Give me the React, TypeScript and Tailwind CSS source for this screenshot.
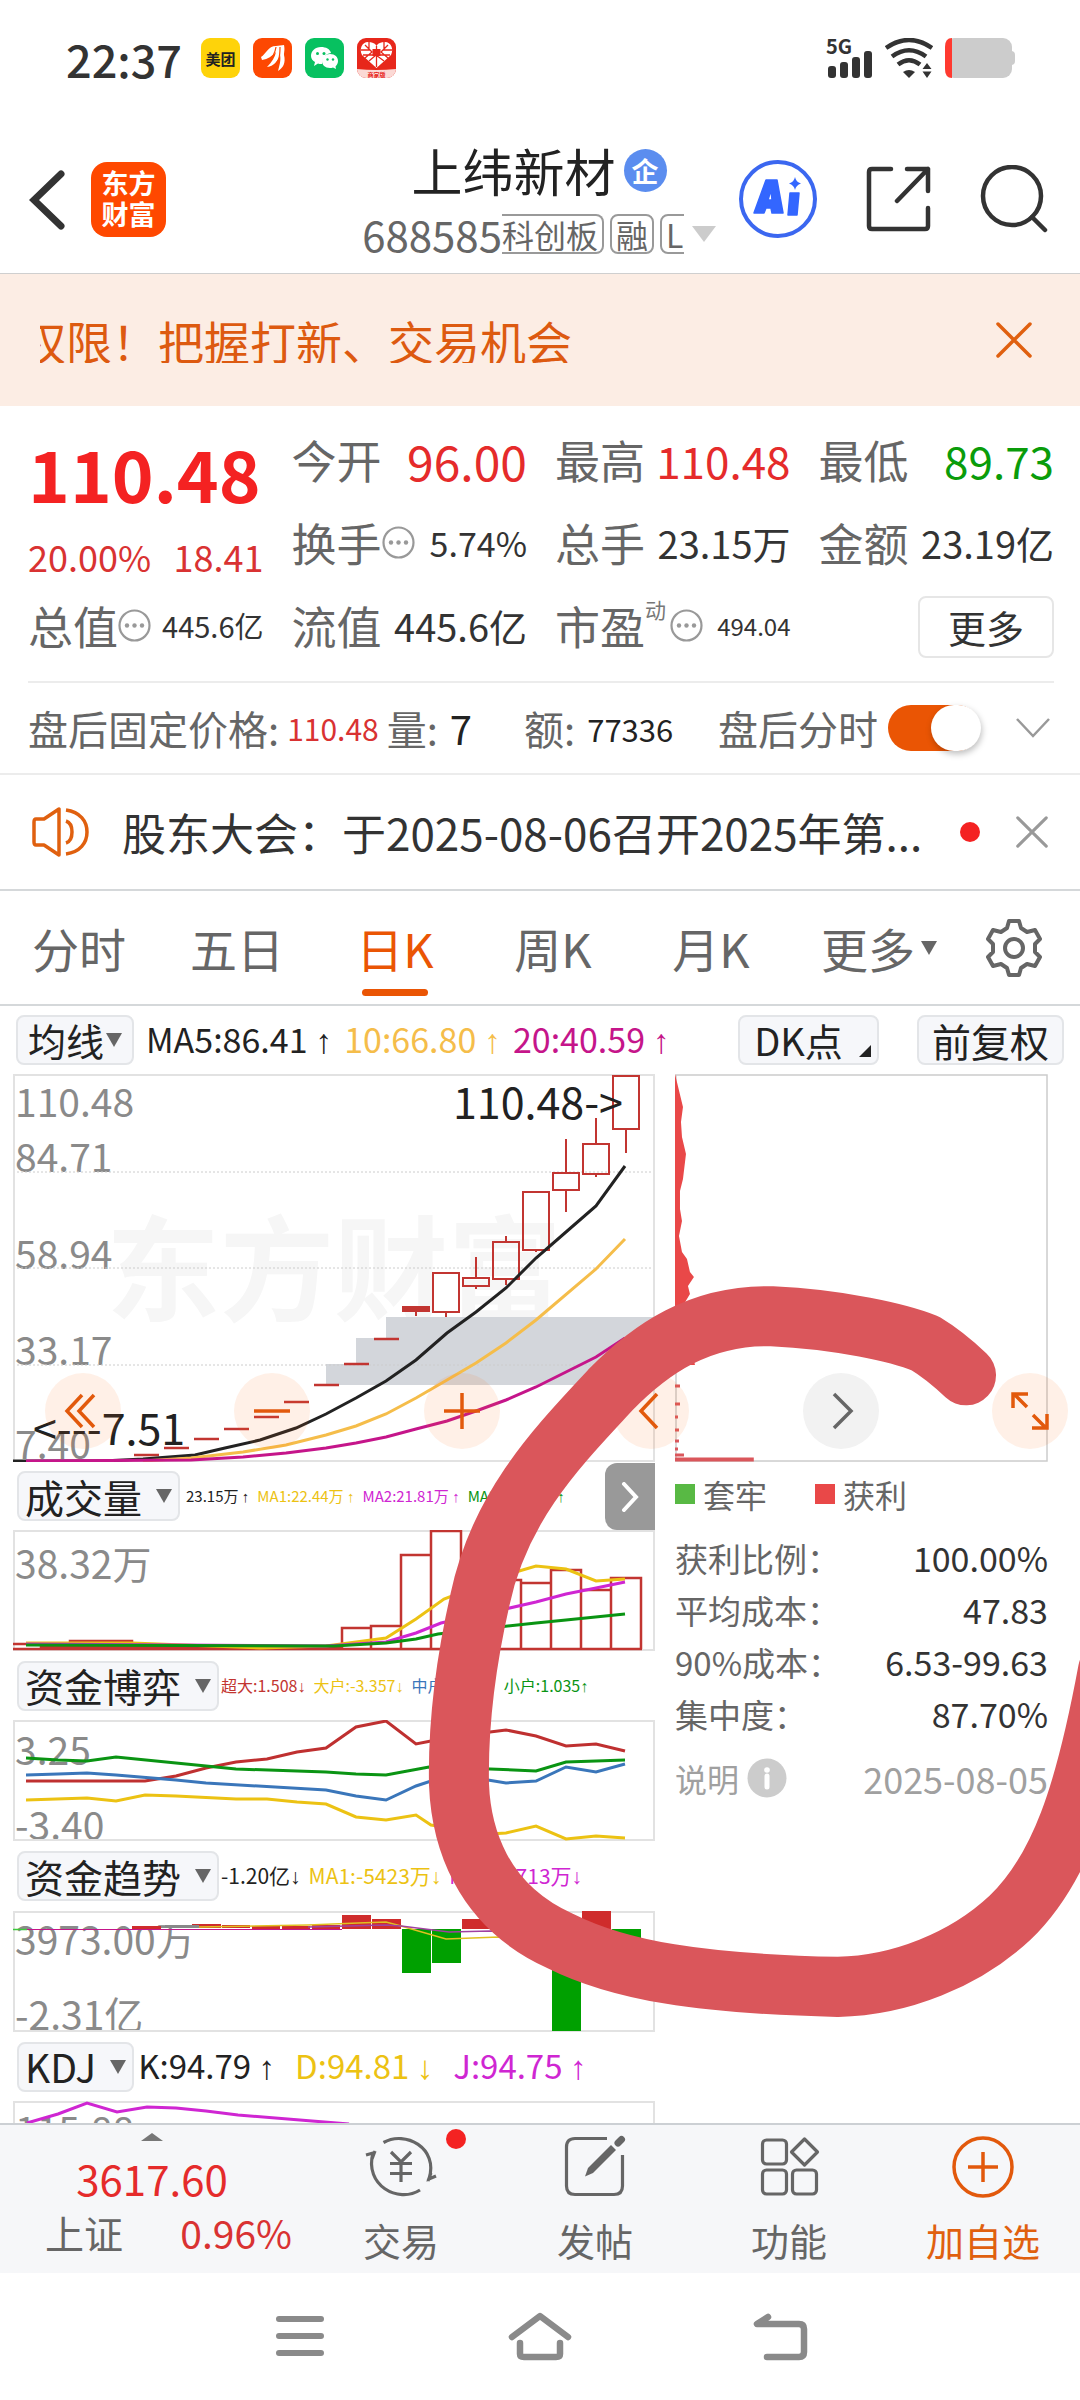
import React from "react";

const RED = "#c23531";

function Dots({ className = "" }: { className?: string }) {
  return (
    <svg viewBox="0 0 33 33" className={"h-[33px] w-[33px] shrink-0 " + className} aria-hidden="true">
      <circle cx="16.5" cy="16.5" r="15" fill="none" stroke="#999" strokeWidth="2.2" />
      <circle cx="9" cy="16.5" r="2.2" fill="#999" />
      <circle cx="16.5" cy="16.5" r="2.2" fill="#999" />
      <circle cx="24" cy="16.5" r="2.2" fill="#999" />
    </svg>
  );
}

function Cross({ color, className }: { color: string; className: string }) {
  return (
    <svg viewBox="0 0 36 36" className={className} fill="none" stroke={color} strokeWidth="3.5" strokeLinecap="round" aria-hidden="true">
      <path d="M2 2L34 34M34 2L2 34" />
    </svg>
  );
}

function Caret({ className }: { className: string }) {
  return (
    <svg viewBox="0 0 16 14" preserveAspectRatio="none" className={className} aria-hidden="true">
      <path d="M0 0H16L8 14Z" fill="currentColor" />
    </svg>
  );
}

function Up() {
  return <span className="font-['Liberation_Sans']">↑</span>;
}
function Down() {
  return <span className="font-['Liberation_Sans']">↓</span>;
}

function StatusBar() {
  return (
    <div className="flex h-[116px] items-center pr-[65px] pl-[66px]">
      <span className="text-[45px] leading-none font-medium text-[#333]">22:37</span>
      <div className="ml-[19px] flex gap-[13px]">
        <span className="flex h-10 w-[39px] items-center justify-center rounded-[9px] bg-[#fed30a] text-[15px] leading-none font-bold text-[#222]">美团</span>
        <svg viewBox="0 0 39 40" className="h-10 w-[39px]" aria-hidden="true">
          <rect width="39" height="40" rx="9" fill="#fd4802" />
          <path d="M8 19C13 16 15 8 23 8L31 7C32 12 31 14 31 17C33 25 30 30 25 33C27 26 28 21 27 17C24 24 21 28 14 29C19 24 22 19 23 14C19 18 15 21 9 22Z" fill="#fff" />
          <path d="M23 9C22 16 19 20 15 24M27 9C27 19 26 24 20 29" stroke="#fd4802" fill="none" strokeWidth="1.2" />
        </svg>
        <svg viewBox="0 0 39 40" className="h-10 w-[39px]" aria-hidden="true">
          <rect width="39" height="40" rx="9" fill="#07c160" />
          <path d="M16 9C10 9 6 13 6 18C6 21 8 23 10 24L9 28L13 25.500C14 26 15 26 17 26C17 20 20 16 26 15C25 11 21 9 16 9Z" fill="#fff" />
          <path d="M25 16C20 16 17 19 17 23C17 27 20 30 25 30C26 30 27 30 28 29.500L31 31L30.500 28.500C32 27 33 25 33 23C33 19 30 16 25 16Z" fill="#fff" />
          <circle cx="12.500" cy="15.500" r="1.500" fill="#07c160" />
          <circle cx="19" cy="15.500" r="1.500" fill="#07c160" />
          <circle cx="22.500" cy="21.500" r="1.200" fill="#07c160" />
          <circle cx="28" cy="21.500" r="1.200" fill="#07c160" />
        </svg>
        <span className="relative h-10 w-[39px] overflow-hidden rounded-[9px] bg-[#e7271b]">
          <svg viewBox="0 0 39 40" className="h-10 w-[39px]" aria-hidden="true">
            <path d="M0 31Q19 33 39 31V40H0Z" fill="#fbd9d5" />
            <path d="M19.500 30L5 17C2 11 5 4 11 4C15 4 18 5 19.500 8C21 5 24 4 28 4C34 4 37 11 34 17Z" fill="#fff" />
            <path d="M8 7L15 14L8 20M31 7L24 14L31 20M12 4V12H4M27 4V12H35M12 23L19 17L27 23M19.500 8V29M6 17H33" fill="none" stroke="#e7271b" strokeWidth="1.300" />
            <rect x="15.500" y="11" width="8" height="7" fill="#e7271b" />
          </svg>
          <span className="absolute inset-x-0 bottom-0 text-center text-[6px] leading-none font-bold text-[#e7271b]">商家版</span>
        </span>
      </div>
      <div className="ml-auto flex items-end gap-3">
        <div className="relative flex h-10 w-[47px] items-end gap-1 pl-0.5">
          <span className="absolute -top-0.5 left-0 text-[20px] leading-none font-bold text-[#333]">5G</span>
          <i className="h-3 w-2 rounded-[3px] bg-[#333]" />
          <i className="h-4 w-2 rounded-[3px] bg-[#333]" />
          <i className="h-[21px] w-2 rounded-[3px] bg-[#333]" />
          <i className="h-[27px] w-2 rounded-[3px] bg-[#333]" />
        </div>
        <svg viewBox="0 0 48 40" className="h-10 w-12" fill="none" stroke="#333" strokeWidth="4.500" aria-hidden="true">
          <path d="M1 10Q24 -6 47 10M7 18.500Q24 6 41 18.500M13 26.500Q24 18 35 26.500" />
          <path d="M18 34Q24 30 30 34L24 40Z" fill="#333" stroke="none" />
          <path d="M37.500 31L42 25L46.500 31ZM37.500 33.500H46.500L42 40Z" fill="#333" stroke="none" />
        </svg>
        <svg viewBox="0 0 70 40" className="h-10 w-[70px]" aria-hidden="true">
          <path d="M66 13Q70 13 70 17V23Q70 27 66 27Z" fill="#ccc" />
          <rect width="67" height="40" rx="9" fill="#ccc" />
          <path d="M7 0V40Q0 40 0 31V9Q0 0 7 0Z" fill="#ff3a30" />
        </svg>
      </div>
    </div>
  );
}

function Header() {
  return (
    <header className="flex h-[158px] items-start border-b border-[#cfcfcf] pr-8 pl-[29px]">
      <button type="button" aria-label="返回" className="mt-[54px]">
        <svg viewBox="0 0 36 60" className="h-[60px] w-9" fill="none" stroke="#333" strokeWidth="7" strokeLinecap="round" aria-hidden="true">
          <path d="M32 4L5 30L32 56" />
        </svg>
      </button>
      <a href="#home" className="mt-[46px] ml-[26px] flex h-[75px] w-[75px] flex-col items-center justify-center rounded-2xl bg-[#ff4800] pb-1 text-[27px] leading-[31px] font-bold text-white">
        <span>东方</span>
        <span>财富</span>
      </a>
      <div className="ml-auto flex flex-col pt-[26px]">
        <div className="flex items-center gap-2 self-center">
          <h1 className="text-[51px] leading-[56px] text-[#222]">上纬新材</h1>
          <span className="flex h-[43px] w-[43px] items-center justify-center rounded-full bg-[#5b8def] text-[27px] leading-none font-bold text-white">企</span>
        </div>
        <div className="mt-[15px] flex items-center text-[#666]">
          <span className="text-[42px] leading-none">688585</span>
          <div className="flex w-[182px] gap-1.5 overflow-hidden text-[32px] leading-none whitespace-nowrap">
            <span className="h-10 shrink-0 rounded-r-lg border-2 border-l-0 border-[#999] pt-0.5 pr-1">科创板</span>
            <span className="h-10 shrink-0 rounded-lg border-2 border-[#999] px-1 pt-0.5">融</span>
            <span className="h-10 shrink-0 rounded-lg border-2 border-[#999] px-1 pt-0.5">L1</span>
          </div>
          <Caret className="ml-2 h-4 w-6 text-[#ccc]" />
        </div>
      </div>
      <div className="mt-[43px] ml-[22px] flex items-center gap-12">
        <button type="button" aria-label="Ai">
          <svg viewBox="0 0 80 80" className="h-20 w-20" aria-hidden="true">
            <circle cx="40" cy="40" r="37" fill="none" stroke="#3b67f0" strokeWidth="4" />
            <path d="M28 21H39L45 54H34L33 49H28L26 54H16ZM33 31L30 41H34Z" fill="#3366ff" fillRule="evenodd" stroke="#3366ff" strokeWidth="1.500" strokeLinejoin="round" />
            <path d="M52 34H61L59 56H50Z" fill="#3366ff" stroke="#3366ff" strokeWidth="1.500" strokeLinejoin="round" />
            <path d="M57 18Q58 23 63 24.500Q58 26 57 31Q56 26 51 24.500Q56 23 57 18Z" fill="#3366ff" />
          </svg>
        </button>
        <button type="button" aria-label="分享">
          <svg viewBox="0 0 66 66" className="h-[66px] w-[66px]" fill="none" stroke="#333" strokeWidth="4.500" strokeLinecap="round" strokeLinejoin="round" aria-hidden="true">
            <path d="M25 3H6Q3 3 3 6V60Q3 63 6 63H59Q62 63 62 60V42M41 3H62V25M62 3L31 35" />
          </svg>
        </button>
        <button type="button" aria-label="搜索">
          <svg viewBox="0 0 68 68" className="h-[68px] w-[68px]" fill="none" stroke="#333" strokeWidth="4.500" strokeLinecap="round" aria-hidden="true">
            <circle cx="32" cy="31" r="29" />
            <path d="M52 52L65 65" />
          </svg>
        </button>
      </div>
    </header>
  );
}

function Stat({ label, value, size, color = "text-[#333]", extra }: { label: string; value: string; size: string; color?: string; extra?: React.ReactNode }) {
  return (
    <div className="flex h-[83px] items-center whitespace-nowrap">
      <span className="text-[45px] leading-none text-[#666]">{label}</span>
      {extra}
      <span className={"ml-auto leading-none " + size + " " + color}>{value}</span>
    </div>
  );
}

function Quote() {
  return (
    <section className="pt-3 pr-[26px] pl-7">
      <div className="grid grid-cols-4 gap-x-7">
        <div>
          <div className="flex h-[109px] items-center text-[71px] leading-none font-bold text-[#f42222]">110.48</div>
          <div className="flex h-[57px] items-center justify-between text-[36px] leading-none text-[#d93232]">
            <span>20.00%</span>
            <span>18.41</span>
          </div>
          <Stat label="总值" value="445.6亿" size="text-[29px]" extra={<Dots />} />
        </div>
        <div>
          <Stat label="今开" value="96.00" size="text-[48px]" color="text-[#e52b2b]" />
          <Stat label="换手" value="5.74%" size="text-[34px]" extra={<Dots />} />
          <Stat label="流值" value="445.6亿" size="text-[38px]" />
        </div>
        <div>
          <Stat label="最高" value="110.48" size="text-[44px]" color="text-[#e52b2b]" />
          <Stat label="总手" value="23.15万" size="text-[38px]" />
          <Stat
            label="市盈"
            value="494.04"
            size="text-[24px]"
            extra={
              <>
                <sup className="-top-4 self-center text-[21px] leading-none text-[#777]">动</sup>
                <Dots className="ml-1" />
              </>
            }
          />
        </div>
        <div>
          <Stat label="最低" value="89.73" size="text-[44px]" color="text-[#0a9c0a]" />
          <Stat label="金额" value="23.19亿" size="text-[38px]" />
          <div className="flex h-[83px] items-center justify-end pt-0.5">
            <button type="button" className="h-[62px] w-[136px] rounded-lg border-2 border-[#e6e6e6] text-[38px] leading-none text-[#333]">更多</button>
          </div>
        </div>
      </div>
      <div className="mt-[14px] flex h-[92px] items-center border-t-2 border-[#ececec] text-[40px] leading-none whitespace-nowrap text-[#666]">
        <span>盘后固定价格:</span>
        <span className="ml-2 text-[30px] text-[#d93232]">110.48</span>
        <span className="ml-2">量:</span>
        <span className="ml-3 text-[#222]">7</span>
        <span className="ml-[52px]">额:</span>
        <span className="ml-3 text-[31px] text-[#222]">77336</span>
        <label htmlFor="after" className="ml-auto">盘后分时</label>
        <input id="after" type="checkbox" role="switch" defaultChecked className="ml-2.5 h-[46px] w-[92px] shrink-0 appearance-none rounded-full bg-[#ea5504] before:ml-[43px] before:block before:h-[46px] before:w-[50px] before:rounded-full before:bg-white before:shadow-[1px_3px_6px_rgba(0,0,0,0.25)]" />
        <button type="button" aria-label="展开" className="ml-9 pr-1">
          <svg viewBox="0 0 34 20" className="h-5 w-[34px]" fill="none" stroke="#999" strokeWidth="2.500" aria-hidden="true">
            <path d="M1 1L17 18L33 1" />
          </svg>
        </button>
      </div>
    </section>
  );
}

function Notice() {
  return (
    <section className="flex h-[118px] items-center border-t-2 border-b-2 border-t-[#ececec] border-b-[#d5d8da] pr-8 pl-8">
      <svg viewBox="0 0 58 50" className="h-[50px] w-[58px] shrink-0" fill="none" stroke="#e0600f" strokeWidth="3.500" strokeLinejoin="round" aria-hidden="true">
        <path d="M12 12L27 2V48L12 38H4Q2 38 2 35V15Q2 12 4 12Z" />
        <path d="M34 14Q40 16 40 25Q40 34 34 36M34 3C48 5 55 14 55 25C55 36 48 45 34 47" />
      </svg>
      <a href="#notice" className="ml-8 text-[44px] leading-none whitespace-nowrap text-[#333]">股东大会：于2025-08-06召开2025年第...</a>
      <i className="ml-auto h-5 w-5 shrink-0 rounded-full bg-[#f42222]" />
      <button type="button" aria-label="关闭公告" className="ml-9">
        <Cross color="#999" className="h-8 w-8" />
      </button>
    </section>
  );
}

function Tabs() {
  const tabs = ["分时", "五日", "日K", "周K", "月K"];
  return (
    <nav className="grid h-[115px] grid-cols-[repeat(6,158fr)_132fr] items-center justify-items-center border-b-2 border-[#d5d8da] text-[47px] leading-none text-[#666]">
      {tabs.map((t) =>
        t === "日K" ? (
          <button key={t} type="button" className="relative text-[#ea5504]">
            {t}
            <i className="absolute inset-x-1.5 -bottom-[25px] h-[7px] rounded-full bg-[#ea5504]" />
          </button>
        ) : (
          <button key={t} type="button">{t}</button>
        )
      )}
      <button type="button" className="flex items-center gap-1.5 pl-5">
        更多
        <Caret className="h-3.5 w-4" />
      </button>
      <button type="button" aria-label="设置">
        <svg viewBox="0 0 58 58" className="h-[58px] w-[58px]" fill="none" stroke="#666" strokeWidth="4" strokeLinejoin="round" aria-hidden="true">
          <path d="M24 2H34L36 9L42 13L50 11L55 20L50 25V33L55 38L50 47L42 45L36 49L34 56H24L22 49L16 45L8 47L3 38L8 33V25L3 20L8 11L16 13L22 9Z" />
          <circle cx="29" cy="29" r="9" />
        </svg>
      </button>
    </nav>
  );
}

function Pick({ children }: { children: React.ReactNode }) {
  return (
    <button type="button" className="flex h-[50px] shrink-0 items-center gap-3.5 rounded-lg border-2 border-[#e3e5e8] bg-[#f6f7fa] px-1.5 text-[39px] leading-none text-[#222]">
      {children}
      <Caret className="h-[14px] w-4 text-[#666]" />
    </button>
  );
}

function Tools() {
  return (
    <div className="flex h-[68px] items-center pr-4 pl-4 whitespace-nowrap">
      <button type="button" className="flex h-[50px] items-center rounded-lg border-2 border-[#e3e5e8] bg-[#f6f7fa] pr-2 pl-2.5 text-[38px] leading-none text-[#222]">
        均线
        <Caret className="mx-0.5 h-[14px] w-4 text-[#666]" />
      </button>
      <div className="ml-3 flex gap-3 text-[34px] leading-none">
        <span className="text-[#222]">MA5:86.41 <Up /></span>
        <span className="text-[#f5bd4a]">10:66.80 <Up /></span>
        <span className="text-[#c5158a]">20:40.59 <Up /></span>
      </div>
      <button type="button" className="relative ml-auto h-[50px] w-[141px] rounded-lg border-2 border-[#e3e5e8] bg-[#f6f7fa] pr-5 text-[38px] leading-none text-[#222]">
        DK点
        <svg viewBox="0 0 12 12" className="absolute right-1.5 bottom-1.5 h-3 w-3" aria-hidden="true">
          <path d="M12 0V12H0Z" fill="#222" />
        </svg>
      </button>
      <button type="button" className="ml-[38px] h-[50px] w-[147px] rounded-lg border-2 border-[#e3e5e8] bg-[#f6f7fa] text-[39px] leading-none text-[#222]">前复权</button>
    </div>
  );
}

function Chart({ h, height, children, labels }: { h: number; height: string; children: React.ReactNode; labels?: React.ReactNode }) {
  return (
    <div className={"relative overflow-hidden " + height}>
      {labels}
      <svg viewBox={"0 0 642 " + h} preserveAspectRatio="none" className="relative block h-full w-full" fill="none" strokeWidth="3" aria-hidden="true">
        {children}
      </svg>
    </div>
  );
}

const label = "absolute left-0.5 text-[39px] leading-none text-[#8a8a8a]";

const candles = [
  [403, 233, 237, 233, 242],
  [433, 199, 238, 199, 243],
  [463, 204, 212, 183, 215],
  [493, 168, 205, 162, 211],
  [523, 118, 176, 118, 178],
  [553, 99, 116, 65, 138],
  [583, 70, 100, 44, 103],
  [613, 2, 55, 2, 79],
];
const dashes = [[121, 381], [151, 374], [181, 365], [211, 355], [241, 343], [271, 328], [301, 311], [331, 290], [361, 265]];

function KLine() {
  return (
    <Chart
      h={388}
      height="h-[388px]"
      labels={
        <>
          <span className="absolute inset-x-0 top-[132px] text-center text-[114px] leading-none font-bold whitespace-nowrap text-[#f6f6f6]">东方财富</span>
          <span className={label + " top-[7px]"}>110.48</span>
          <span className={label + " top-[62px]"}>84.71</span>
          <span className={label + " top-[159px]"}>58.94</span>
          <span className={label + " top-[255px]"}>33.17</span>
          <span className={label + " top-[349px]"}>7.40</span>
          <span className="absolute top-[5px] right-8 z-10 text-[43px] leading-none text-[#222]">110.48-&gt;</span>
          <span className="absolute top-[331px] left-5 z-10 text-[43px] leading-none text-[#222]">&lt;---7.51</span>
        </>
      }
    >
      <path d="M373 243H641V311H313V290H343V264H373Z" fill="#d3d6db" />
      <path d="M0 98H641M0 194H641M0 291H641" stroke="#ccc" strokeWidth="1" strokeDasharray="2 2" />
      <rect x="1" y="1" width="640" height="386" stroke="#e2e2e2" strokeWidth="2" />
      <g stroke={RED} strokeWidth="2">
        {dashes.map(([x, y]) => (
          <path key={x} d={`M${x} ${y}h25`} strokeWidth="2.500" />
        ))}
        {candles.map(([x, t, b, hi, lo]) => (
          <g key={x}>
            <path d={`M${x} ${hi}V${t}M${x} ${b}V${lo}`} />
            <rect x={x - 13} y={t} width="26" height={b - t} fill={b - t < 5 ? RED : "none"} />
          </g>
        ))}
      </g>
      <path d="M0 387L90 387L130 385L182 381L212 374L247 366L283 354L313 340L343 324L373 307L403 286L434 259L463 238L493 214L523 184L553 158L583 132L612 92" stroke="#222" />
      <path d="M130 387L178 384L230 378L273 371L313 361L343 352L373 340L403 324L434 306L463 289L493 269L523 246L583 195L612 165" stroke="#f5bd4a" />
      <path d="M13 387L178 386L230 383L273 379L313 374L343 369L373 363L403 355L434 347L463 337L493 326L523 313L553 298L583 283L612 264" stroke="#c5158a" />
    </Chart>
  );
}

const readout = "flex gap-2 overflow-hidden leading-none whitespace-nowrap ";

function Indicators() {
  return (
    <>
      <div className="relative flex h-[68px] items-center gap-1.5 pl-1">
        <Pick>成交量</Pick>
        <div className={readout + "text-[15px]"}>
          <span className="text-[#222]">23.15万 <Up /></span>
          <span className="text-[#ecc213]">MA1:22.44万 <Up /></span>
          <span className="text-[#cf26d2]">MA2:21.81万 <Up /></span>
          <span className="text-[#0a9413]">MA3:13.69万 <Up /></span>
        </div>
        <button type="button" aria-label="收起" className="absolute top-px right-0 flex h-[67px] w-[50px] items-center justify-center rounded-l-xl bg-[#999]">
          <svg viewBox="0 0 18 30" className="h-[30px] w-[18px]" fill="none" stroke="#fff" strokeWidth="4" strokeLinecap="round" aria-hidden="true">
            <path d="M3 2L15 15L3 28" />
          </svg>
        </button>
      </div>
      <Chart h={121} height="h-[121px]" labels={<span className={label + " top-[13px]"}>38.32万</span>}>
        <rect x="1" y="1" width="640" height="119" stroke="#e2e2e2" strokeWidth="2" />
        <g stroke={RED} strokeWidth="2.500">
          <path d="M0 114H28V119M57 119V111H88V119M88 111H119V119M0 119H629" />
          <path d="M28 118H329" strokeWidth="4" />
          <path d="M329 119V98H358V119M358 98V96H388V119M388 96V25H418V119M418 25V1H448V119M448 40H478V119M478 50H508V119M508 53H538V119M538 53V40H568V119M568 60H598V119M598 60V48H628V119" />
        </g>
        <path d="M13 113L119 113L247 118L313 116L373 108L403 89L431 69L496 44L523 36L553 39L583 51L612 49" stroke="#ecc213" />
        <path d="M13 114L313 116L373 112L403 103L428 93L488 80L523 72L553 64L583 58L612 52" stroke="#cf26d2" />
        <path d="M13 115L321 116L373 113L403 109L425 104L486 97L523 93L553 90L612 84" stroke="#0a9413" />
      </Chart>

      <div className="flex h-[69px] items-center gap-0.5 pl-1">
        <Pick>资金博弈</Pick>
        <div className={readout + "text-[16px]"}>
          <span className="text-[#c23531]">超大:1.508<Down /></span>
          <span className="text-[#ecc213]">大户:-3.357<Down /></span>
          <span className="text-[#3a76ba]">中户:0.814<Up /></span>
          <span className="text-[#0a9413]">小户:1.035<Up /></span>
        </div>
      </div>
      <Chart
        h={121}
        height="h-[121px]"
        labels={
          <>
            <span className={label + " top-[9px]"}>3.25</span>
            <span className={label + " top-[84px]"}>-3.40</span>
          </>
        }
      >
        <rect x="1" y="1" width="640" height="119" stroke="#e2e2e2" strokeWidth="2" />
        <path d="M13 61H132L163 56L193 48L223 42L254 39L284 32L313 28L343 7L373 1L403 24L418 21L477 12L493 10L523 16L553 26L583 24L612 31" stroke="#bf3030" />
        <path d="M13 38L45 40L74 41L103 37L163 43L193 46L223 49L313 52L343 54L373 55L416 47L477 49L523 51L553 42L583 41L612 40" stroke="#0a9413" />
        <path d="M13 55L45 54L74 53L103 55L163 60L193 63L313 70L343 76L373 80L403 66L418 61L475 60L493 63L523 61L553 47L583 52L612 44" stroke="#3a76ba" />
        <path d="M13 80L74 78L103 81L132 75L163 76L223 79L254 79L284 82L313 84L343 97L373 100L403 95L418 105L477 114L493 113L523 106L553 119L583 116L612 118" stroke="#ecc213" />
      </Chart>

      <div className="flex h-[70px] items-center gap-0.5 pl-1">
        <Pick>资金趋势</Pick>
        <div className={readout + "text-[21px]"}>
          <span className="text-[#222]">-1.20亿<Down /></span>
          <span className="text-[#ecc213]">MA1:-5423万<Down /></span>
          <span className="text-[#cf26d2]">MA2:-3713万<Down /></span>
        </div>
      </div>
      <Chart
        h={121}
        height="h-[121px]"
        labels={
          <>
            <span className={label + " top-[8px]"}>3973.00万</span>
            <span className={label + " top-[83px]"}>-2.31亿</span>
          </>
        }
      >
        <rect x="1" y="1" width="640" height="119" stroke="#e2e2e2" strokeWidth="2" />
        <path d="M0 18.500H14" stroke="#3ec83e" strokeWidth="1.500" />
        <path d="M14 18.500H329" stroke="#c5158a" strokeWidth="1" />
        <path d="M119 15h29v3h-29zM179 13h29v4h-29zM209 14h28v3h-28zM239 15h28v3h-28zM269 15h28v3h-28zM299 14h28v4h-28zM329 4h29v14h-29zM359 8h29v10h-29zM449 8h29v10h-29zM569 0h29v18h-29z" fill="#cf2c2c" />
        <path d="M152 14h34v3h-34z" fill="#888" />
        <path d="M389 18h29v44h-29zM419 18h29v34h-29zM539 18h29v102h-29zM599 18h29v14h-29z" fill="#00a000" />
        <path d="M186 16L295 14L345 12L373 11L388 15L433 28L486 26L560 30L612 26" stroke="#e0c020" strokeWidth="1.500" />
        <path d="M295 16L373 14L388 15L436 21L477 20L612 24" stroke="#a040a0" strokeWidth="1.500" />
      </Chart>

      <div className="flex h-[69px] items-center gap-1 pl-1">
        <Pick>KDJ</Pick>
        <div className="flex gap-5 text-[33px] leading-none whitespace-nowrap">
          <span className="text-[#222]">K:94.79 <Up /></span>
          <span className="text-[#ecc213]">D:94.81 <Down /></span>
          <span className="text-[#cf26d2]">J:94.75 <Up /></span>
        </div>
      </div>
      <Chart h={22} height="h-[22px]" labels={<span className={label + " top-[8px]"}>115.88</span>}>
        <path d="M1 22V1H641V22" stroke="#e2e2e2" strokeWidth="2" />
        <path d="M14 22L45 13L74 2L104 11L134 6L163 7L193 10L225 14L336 23" stroke="#cf26d2" />
      </Chart>
    </>
  );
}

function Chips() {
  const rows = [
    ["获利比例：", "100.00%"],
    ["平均成本：", "47.83"],
    ["90%成本：", "6.53-99.63"],
    ["集中度：", "87.70%"],
  ];
  return (
    <div className="pr-8 pl-5">
      <svg viewBox="0 0 374 388" preserveAspectRatio="none" className="block h-[388px] w-full" aria-hidden="true">
        <rect x="1" y="1" width="372" height="386" fill="none" stroke="#ccc" strokeWidth="1.500" />
        <path d="M0 0L8 33L6 48L7 63L11 80L8 105L5 117L5 135L7 147L4 162L7 178L12 185L15 198L19 203L13 212L15 220L9 230L20 291H0Z" fill="#e94848" />
        <path d="M0 312H5M0 330H5M0 343H3M0 356H4M0 367H4M0 375H3M0 381H9" stroke="#da565b" strokeWidth="3" />
        <path d="M0 385.500H79" stroke="#da565b" strokeWidth="4" />
      </svg>
      <div className="mt-4 flex items-center text-[32px] leading-none text-[#666]">
        <i className="h-5 w-5 bg-[#58b944]" />
        <span className="ml-2">套牢</span>
        <i className="ml-12 h-5 w-5 bg-[#e94848]" />
        <span className="ml-2">获利</span>
      </div>
      <table className="mt-[22px] w-full text-[33px] leading-none">
        <tbody>
          {rows.map(([k, v]) => (
            <tr key={k} className="h-13">
              <th scope="row" className="p-0 text-left font-normal whitespace-nowrap text-[#666]">{k}</th>
              <td className="p-0 text-right text-[34px] whitespace-nowrap text-[#333]">{v}</td>
            </tr>
          ))}
        </tbody>
      </table>
      <div className="mt-[18px] flex items-center text-[32px] leading-none text-[#a0a0a0]">
        <span>说明</span>
        <button type="button" aria-label="说明详情" className="ml-2">
          <svg viewBox="0 0 40 40" className="h-10 w-10" aria-hidden="true">
            <circle cx="20" cy="20" r="19.500" fill="#ccc" />
            <circle cx="20" cy="12" r="2.800" fill="#fff" />
            <path d="M20 18V29" stroke="#fff" strokeWidth="5" strokeLinecap="round" />
          </svg>
        </button>
        <span className="ml-auto text-[36px]">2025-08-05</span>
      </div>
    </div>
  );
}

function Controls() {
  const items = [
    ["更早", "M37 22L22 38L37 54M49 22L34 38L49 54"],
    ["缩小", "M20 38H56"],
    ["放大", "M20 38H56M38 20V56"],
    ["左移", "M44 21L28 38L44 55"],
    ["右移", "M31 21L48 38L31 55"],
    ["全屏", "M35 34L22 21M21 35V21H36M41 42L54 55M55 41V55H40"],
  ];
  return (
    <div className="absolute top-[299px] right-3 left-[45px] z-10 flex justify-between">
      {items.map(([name, d]) => (
        <button
          key={name}
          type="button"
          aria-label={name}
          className={name === "右移" ? "rounded-full bg-[#f2f2f2] text-[#666]" : "rounded-full bg-[#ff6a10]/10 text-[#e2590c]"}
        >
          <svg viewBox="0 0 76 76" className="h-[76px] w-[76px]" fill="none" stroke="currentColor" strokeWidth="3.500" aria-hidden="true">
            <path d={d} />
          </svg>
        </button>
      ))}
    </div>
  );
}

function BottomNav() {
  const item = "flex flex-col items-center gap-5 pt-2.5 text-[38px] leading-none";
  const icon = "h-[66px] w-[76px]";
  return (
    <nav className="relative z-30 grid h-[150px] grid-cols-[304fr_194fr_194fr_194fr_194fr] border-t-2 border-[#ccd0d4] bg-[#f6f7f9] text-[#666]">
      <a href="#index" className="flex flex-col items-center pt-2 leading-none">
        <svg viewBox="0 0 22 8" className="h-2 w-[22px]" aria-hidden="true">
          <path d="M11 0L22 8H0Z" fill="#777" />
        </svg>
        <span className="mt-4 text-[42px] text-[#e52b2b]">3617.60</span>
        <span className="mt-3.5 flex w-full justify-between pr-3 pl-[45px] text-[39px]">
          <span>上证</span>
          <span className="text-[#d93232]">0.96%</span>
        </span>
      </a>
      <button type="button" className={item + " relative"}>
        <svg viewBox="0 0 76 66" className={icon} fill="none" stroke="#666" strokeWidth="3.200" aria-hidden="true">
          <path d="M20.500 7.500C42 -5 76 13 66 44L73 41M65 46L68 38" />
          <path d="M57 55C35 69 1 50 10 18L3 20M12 16L9 24" />
          <path d="M28 17L38 27L48 17M38 27V47M27 28.500H49M27 38.500H49" />
        </svg>
        交易
        <i className="absolute top-1 right-8 h-5 w-5 rounded-full bg-[#f42222]" />
      </button>
      <button type="button" className={item}>
        <svg viewBox="0 0 76 66" className={icon} fill="none" stroke="#666" strokeWidth="3.200" aria-hidden="true">
          <path d="M50 3.500H18Q9.500 3.500 9.500 12V51Q9.500 59.500 18 59.500H57Q65.500 59.500 65.500 51V20" />
          <path d="M28 41.500L31 33L54 10L59 15L36 38Z" fill="#666" stroke="none" />
          <path d="M61 8L64.500 4.500" strokeWidth="7" strokeLinecap="round" />
        </svg>
        发帖
      </button>
      <button type="button" className={item}>
        <svg viewBox="0 0 76 66" className={icon} fill="none" stroke="#666" strokeWidth="3.200" strokeLinejoin="round" aria-hidden="true">
          <rect x="11.500" y="5" width="24" height="24" rx="4" />
          <rect x="11.500" y="35" width="24" height="24" rx="4" />
          <rect x="41.500" y="35" width="24" height="24" rx="4" />
          <path d="M53.500 4L66.500 17L53.500 30L40.500 17Z" />
        </svg>
        功能
      </button>
      <button type="button" className={item + " text-[#e0600f]"}>
        <svg viewBox="0 0 76 66" className={icon} fill="none" stroke="#e2590c" strokeWidth="3.500" aria-hidden="true">
          <circle cx="38" cy="32" r="29" />
          <path d="M38 17V47M23 32H53" />
        </svg>
        加自选
      </button>
    </nav>
  );
}

function SystemNav() {
  return (
    <div className="flex h-[126px] items-center justify-center gap-[176px] bg-white text-[#8a8a8a]">
      <button type="button" aria-label="最近任务">
        <svg viewBox="0 0 64 50" className="h-[50px] w-16" stroke="currentColor" strokeWidth="6" strokeLinecap="round" aria-hidden="true">
          <path d="M11 8H53M11 25H53M11 42H53" />
        </svg>
      </button>
      <button type="button" aria-label="主屏幕">
        <svg viewBox="0 0 64 50" className="h-[50px] w-16" fill="none" stroke="currentColor" strokeWidth="6.500" strokeLinecap="round" strokeLinejoin="round" aria-hidden="true">
          <path d="M4 26L32 5L60 26M12 32V43Q12 46 16 46H48Q52 46 52 43V32" />
        </svg>
      </button>
      <button type="button" aria-label="返回上一页">
        <svg viewBox="0 0 64 50" className="h-[50px] w-16" fill="none" stroke="currentColor" strokeWidth="6.500" strokeLinecap="round" strokeLinejoin="round" aria-hidden="true">
          <path d="M20 6L9 13H51Q56 13 56 18V41Q56 46 51 46H19" />
        </svg>
      </button>
    </div>
  );
}

export default function App() {
  return (
    <main className="relative overflow-hidden bg-white font-['Noto_Sans_CJK_SC',sans-serif]">
      <StatusBar />
      <Header />
      <section className="flex h-[132px] items-center bg-[#fcede4] pr-12 pl-10 text-[46px] leading-none text-[#dd5a10]">
        <div className="flex-1 overflow-hidden">
          <p className="-ml-5 whitespace-nowrap">权限！把握打新、交易机会</p>
        </div>
        <button type="button" aria-label="关闭">
          <Cross color="#e0600f" className="h-9 w-9" />
        </button>
      </section>
      <Quote />
      <Notice />
      <Tabs />
      <Tools />
      <section className="relative grid grid-cols-[655fr_425fr]">
        <div className="min-w-0 pl-[13px]">
          <KLine />
          <Indicators />
        </div>
        <Chips />
        <Controls />
        <svg viewBox="0 0 1080 1048" preserveAspectRatio="none" className="pointer-events-none absolute inset-0 z-20 h-full w-full overflow-visible" fill="none" stroke="#da565b" strokeWidth="60" strokeLinecap="round" strokeLinejoin="round" aria-hidden="true">
          <path d="M966 301C950 286 940 278 925 269C900 259 840 245 772 242C700 240 650 275 610 316C560 370 500 430 480 525C463 600 458 660 459 710C461 760 480 830 560 866C620 896 700 909 838 912C900 911 965 885 1010 843C1060 795 1085 720 1108 596" />
        </svg>
      </section>
      <BottomNav />
      <SystemNav />
    </main>
  );
}
